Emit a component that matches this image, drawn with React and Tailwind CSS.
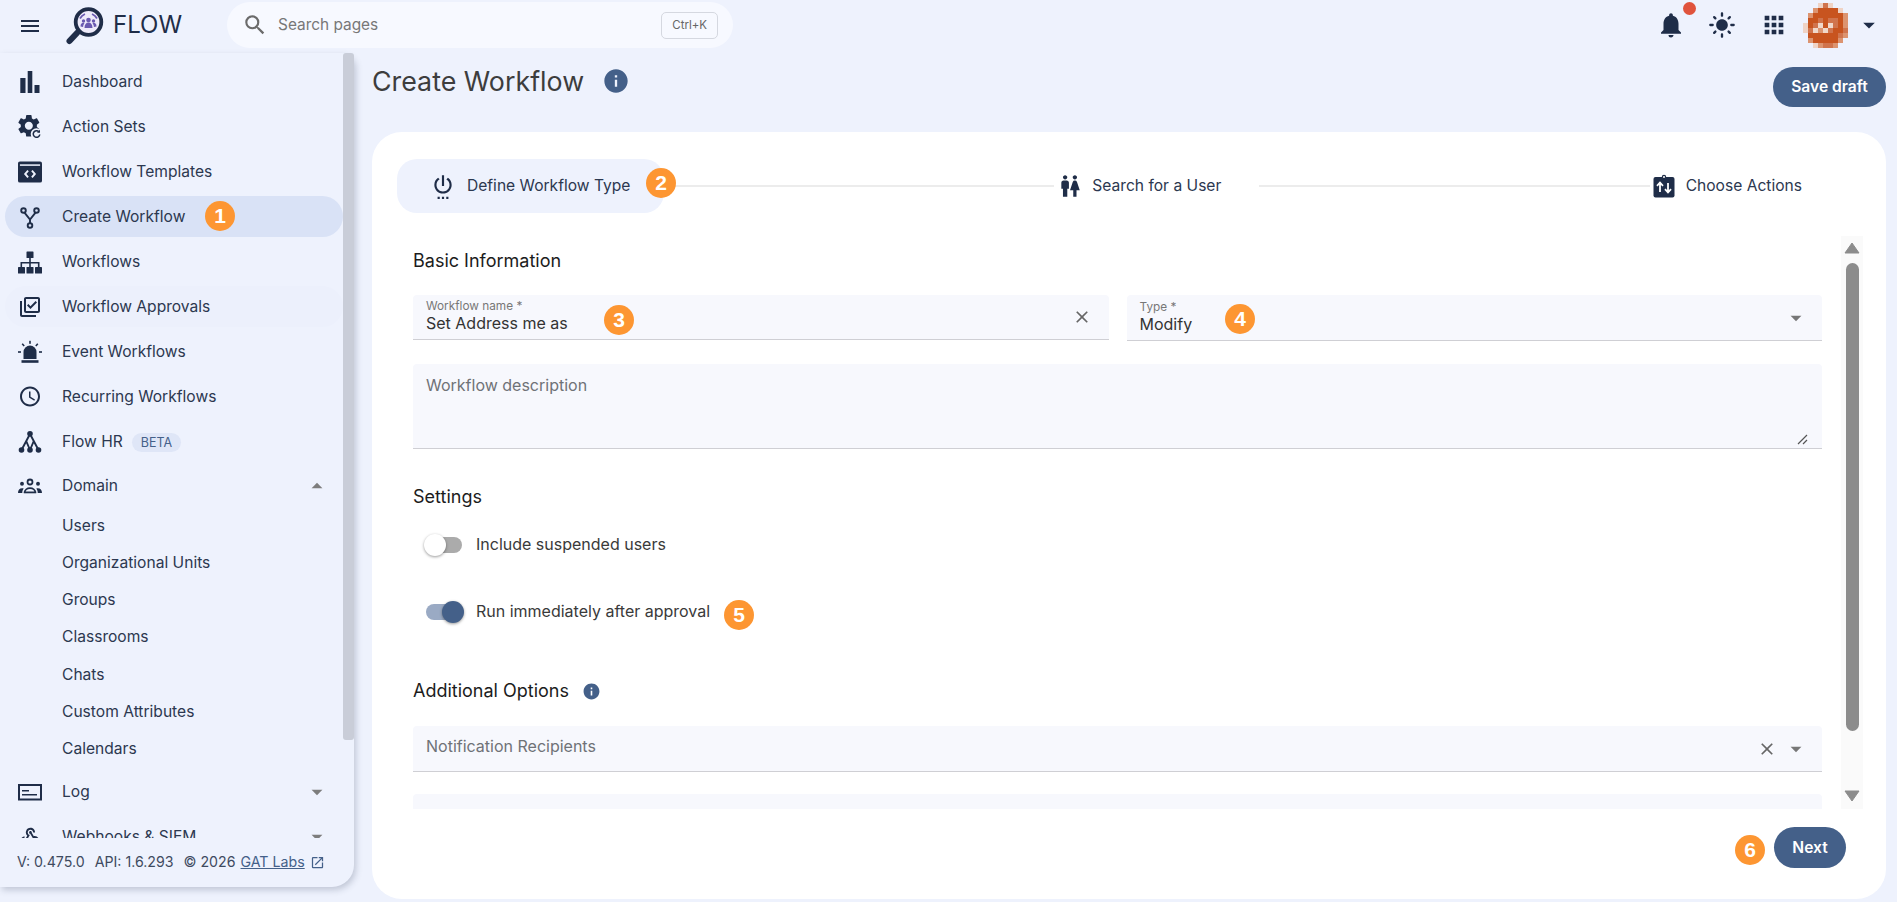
import {
  MdMenu,
  MdSearch,
  MdOutlineLibraryAddCheck,
  MdOutlineSchedule,
  MdWebhook,
  MdOpenInNew,
  MdSettingsPower,
  MdWc,
  MdNotifications,
  MdLightMode,
  MdApps,
  MdArrowDropDown,
  MdArrowDropUp,
  MdClose,
  MdInfo,
} from "react-icons/md";

const GEAR =
  "M19.14 12.94c.04-.3.06-.61.06-.94 0-.32-.02-.64-.07-.94l2.03-1.58c.18-.14.23-.41.12-.61l-1.92-3.32c-.12-.22-.37-.29-.59-.22l-2.39.96c-.5-.38-1.03-.7-1.62-.94l-.36-2.54c-.04-.24-.24-.41-.48-.41h-3.84c-.24 0-.43.17-.47.41l-.36 2.54c-.59.24-1.13.57-1.62.94l-2.39-.96c-.22-.08-.47 0-.59.22L2.74 8.87c-.12.21-.08.47.12.61l2.03 1.58c-.05.3-.09.63-.09.94s.02.64.07.94l-2.03 1.58c-.18.14-.23.41-.12.61l1.92 3.32c.12.22.37.29.59.22l2.39-.96c.5.38 1.03.7 1.62.94l.36 2.54c.05.24.24.41.48.41h3.84c.24 0 .44-.17.47-.41l.36-2.54c.59-.24 1.13-.56 1.62-.94l2.39.96c.22.08.47 0 .59-.22l1.92-3.32c.12-.22.07-.47-.12-.61l-2.01-1.58zM12 15.6c-1.98 0-3.6-1.62-3.6-3.6s1.62-3.6 3.6-3.6 3.6 1.62 3.6 3.6-1.62 3.6-3.6 3.6z";

const NAVY = "#1f2d48";

function BarsIcon() {
  return (
    <svg width="24" height="24" viewBox="0 0 24 24" fill={NAVY}>
      <rect x="2.3" y="8" width="5.2" height="15" />
      <rect x="9.7" y="1" width="4.6" height="22" />
      <rect x="16.5" y="15" width="5" height="8" />
    </svg>
  );
}

function ActionSetsIcon() {
  return (
    <svg width="24" height="24" viewBox="0 0 24 24">
      <path d={GEAR} fill={NAVY} transform="translate(-2.6 -2.6) scale(1.12)" />
      <circle cx="18.5" cy="19" r="5.8" fill="#eef2fd" />
      <path d="M21.8 19.5a3.3 3.3 0 1 1-1-2.9" fill="none" stroke={NAVY} strokeWidth="1.5" />
      <path d="M22 14.8v3h-3z" fill={NAVY} />
    </svg>
  );
}

function TemplatesIcon() {
  return (
    <svg width="25" height="24" viewBox="0 0 25 24">
      <rect x="0" y="1" width="25" height="22" rx="2" fill={NAVY} />
      <rect x="2" y="4" width="21" height="1.6" fill="#eef2fd" />
      <path d="M10.5 10.5l-3 3.5 3 3.5M14.5 10.5l3 3.5-3 3.5" fill="none" stroke="#eef2fd" strokeWidth="2" />
    </svg>
  );
}

function ForkIcon() {
  return (
    <svg width="24" height="24" viewBox="0 0 24 24" fill="none" stroke={NAVY} strokeWidth="1.9">
      <circle cx="5.5" cy="5.5" r="2.3" />
      <circle cx="18.5" cy="5.5" r="2.3" />
      <circle cx="12" cy="20.5" r="2.3" />
      <path d="M6.5 7.6L12 14.5l5.5-6.9M12 14.5v3.7" />
    </svg>
  );
}

function SitemapIcon() {
  return (
    <svg width="24" height="24" viewBox="0 0 24 24" fill={NAVY}>
      <rect x="8.5" y="1.5" width="7" height="6.5" rx="0.6" />
      <rect x="0" y="17" width="7" height="6.5" rx="0.6" />
      <rect x="8.5" y="17" width="7" height="6.5" rx="0.6" />
      <rect x="17" y="17" width="7" height="6.5" rx="0.6" />
      <path d="M11.2 8h1.6v4h8.7v5h-1.6v-3.4h-7.1V17h-1.6v-3.4H4.1V17H2.5v-5h8.7z" />
    </svg>
  );
}

function SirenIcon() {
  return (
    <svg width="24" height="24" viewBox="0 0 24 24" fill={NAVY}>
      <path d="M5.5 19v-7a6.5 6.5 0 0 1 13 0v7z" />
      <rect x="3.5" y="20.2" width="17" height="2.6" />
      <rect x="11.2" y="0.8" width="1.6" height="3" />
      <path d="M3.6 4.2l1.2-1 2 2.3-1.2 1zM20.4 4.2l-1.2-1-2 2.3 1.2 1z" />
      <rect x="0" y="11.2" width="3" height="1.6" />
      <rect x="21" y="11.2" width="3" height="1.6" />
    </svg>
  );
}

function TreeIcon() {
  return (
    <svg width="24" height="24" viewBox="0 0 24 24" fill={NAVY}>
      <circle cx="12" cy="3.8" r="2.8" />
      <circle cx="3.5" cy="20" r="2.8" />
      <circle cx="12" cy="20" r="2.8" />
      <circle cx="20.5" cy="20" r="2.8" />
      <path
        d="M12 4L3.5 20M12 4l8.5 16M8.2 11L12 20M15.8 11L12 20"
        fill="none"
        stroke={NAVY}
        strokeWidth="1.9"
      />
    </svg>
  );
}

function GroupIcon() {
  return (
    <svg width="27" height="24" viewBox="0 0 27 24" fill={NAVY}>
      <circle cx="13.5" cy="7.5" r="2.8" fill="none" stroke={NAVY} strokeWidth="2" />
      <circle cx="4.5" cy="9.5" r="2.2" />
      <circle cx="22.5" cy="9.5" r="2.2" />
      <path d="M7.5 19.5c0-3.2 2.8-5 6-5s6 1.8 6 5v0" fill="none" stroke={NAVY} strokeWidth="2" />
      <rect x="6.5" y="18.2" width="14" height="2" />
      <path d="M0 19.8c0-3 1.8-5.2 4.6-5.2.7 0 1.3.1 1.8.3-1 1.2-1.6 2.9-1.6 4.9zM27 19.8c0-3-1.8-5.2-4.6-5.2-.7 0-1.3.1-1.8.3 1 1.2 1.6 2.9 1.6 4.9z" />
    </svg>
  );
}

function LogIcon() {
  return (
    <svg width="24" height="24" viewBox="0 0 24 24" fill="none" stroke={NAVY}>
      <rect x="1" y="5" width="22" height="14.5" strokeWidth="2" />
      <path d="M4 10.8h7M4 14.7h15" strokeWidth="1.4" />
    </svg>
  );
}

function ActionsIcon() {
  return (
    <svg width="24" height="24" viewBox="0 0 24 24">
      <rect x="1.5" y="3" width="21" height="20.5" rx="2" fill={NAVY} />
      <circle cx="12" cy="3" r="1.6" fill="#fff" stroke={NAVY} strokeWidth="1.2" />
      <path d="M8 18V9M5 11.8L8 8.5l3 3.3M16 9v9M13 15.2l3 3.3 3-3.3" fill="none" stroke="#fff" strokeWidth="1.8" />
    </svg>
  );
}

function Logo() {
  return (
    <svg width="44" height="44" viewBox="0 0 44 44">
      <path d="M13 30L5.5 38" stroke={NAVY} strokeWidth="6" strokeLinecap="round" />
      <circle cx="24.5" cy="19" r="12.8" fill="#eeebfa" stroke={NAVY} strokeWidth="3.8" />
      <g fill="#6a5ab0">
        <circle cx="24.5" cy="17" r="2.3" />
        <circle cx="19.5" cy="18" r="1.7" />
        <circle cx="29.5" cy="18" r="1.7" />
        <path d="M20.5 25c0-3.6 1.6-5.5 4-5.5s4 1.9 4 5.5zM16.5 23.5c0-2.6 1-3.8 3-3.8l1 .8c-1 1-1.3 2-1.4 3.6zM32.5 23.5c0-2.6-1-3.8-3-3.8l-1 .8c1 1 1.3 2 1.4 3.6z" />
      </g>
      <path
        d="M16 15.5a10 10 0 0 1 5-4.5M33 15.5a10 10 0 0 0-5-4.5"
        fill="none"
        stroke="#6a5ab0"
        strokeWidth="1.8"
      />
    </svg>
  );
}

const AVATAR_COLORS = { o: "#c8541f", m: "#d0744d", l: "#dc9470", p: "#efd3c5", w: "#f0d8ca" };
const AVATAR_ROWS = [
  "...pmp...",
  "..loooop.",
  ".looooool",
  ".oomommol",
  "pomwowmol",
  "pmwlwmoom",
  ".ooooooml",
  ".loooool.",
  "..plmml..",
];

function Avatar() {
  return (
    <svg width="45" height="45" viewBox="0 0 45 45" shapeRendering="crispEdges">
      {AVATAR_ROWS.map((row, y) =>
        row.split("").map((c, x) =>
          c === "." ? null : (
            <rect key={`${x}-${y}`} x={x * 5} y={y * 5} width="5" height="5" fill={AVATAR_COLORS[c]} />
          )
        )
      )}
    </svg>
  );
}

function Triangle({ up }) {
  return (
    <svg width="16" height="12" viewBox="0 0 16 12">
      <path d={up ? "M8 1l7 10H1z" : "M1 1h14l-7 10z"} fill="#8c8c8c" stroke="#8c8c8c" strokeLinejoin="round" />
    </svg>
  );
}

function NavItem({ icon, label, active, soft, extra, caret, className = "" }) {
  return (
    <div
      className={`ml-[5px] flex h-[41px] shrink-0 items-center rounded-full pl-[13px] pr-[13px] ${
        active ? "bg-[#d9e2f6]" : soft ? "bg-[#ecf0fc]" : ""
      } ${className}`}
    >
      <span className="flex h-6 w-6 shrink-0 items-center justify-center text-[#1f2d48]">{icon}</span>
      <span className="ml-[20px] text-[15.6px] text-[#2c3850]">{label}</span>
      {extra}
      {caret === "up" && <MdArrowDropUp size={26} className="ml-auto text-[#7d7d7d]" />}
      {caret === "down" && <MdArrowDropDown size={26} className="ml-auto text-[#7d7d7d]" />}
    </div>
  );
}

function SubItem({ label }) {
  return (
    <div className="flex h-[37.2px] shrink-0 items-center pl-[62px] text-[15.6px] text-[#2c3850]">{label}</div>
  );
}

function Sidebar() {
  return (
    <aside className="flex h-[834px] w-[354px] shrink-0 flex-col rounded-tr-[12px] rounded-br-[22px] bg-[#eef2fd] shadow-[2px_3px_6px_rgba(60,70,100,0.25)]">
      <div className="flex h-[785px] overflow-hidden">
        <nav className="flex w-[343px] shrink-0 flex-col gap-[4px] pt-[8px]">
          <NavItem icon={<BarsIcon />} label="Dashboard" />
          <NavItem icon={<ActionSetsIcon />} label="Action Sets" />
          <NavItem icon={<TemplatesIcon />} label="Workflow Templates" />
          <NavItem icon={<ForkIcon />} label="Create Workflow" active />
          <NavItem icon={<SitemapIcon />} label="Workflows" />
          <NavItem icon={<MdOutlineLibraryAddCheck size={28} />} label="Workflow Approvals" soft />
          <NavItem icon={<SirenIcon />} label="Event Workflows" />
          <NavItem icon={<MdOutlineSchedule size={29} />} label="Recurring Workflows" />
          <NavItem
            icon={<TreeIcon />}
            label="Flow HR"
            extra={
              <span className="ml-[9px] mt-[2px] rounded-full bg-[#dfe6f7] px-[9px] py-[2px] text-[12.5px] leading-[15px] text-[#446089]">
                BETA
              </span>
            }
          />
          <NavItem icon={<GroupIcon />} label="Domain" caret="up" className="-mt-[1px]" />
          <div className="-mt-[3px] flex flex-col">
            <SubItem label="Users" />
            <SubItem label="Organizational Units" />
            <SubItem label="Groups" />
            <SubItem label="Classrooms" />
            <SubItem label="Chats" />
            <SubItem label="Custom Attributes" />
            <SubItem label="Calendars" />
          </div>
          <NavItem icon={<LogIcon />} label="Log" caret="down" />
          <NavItem icon={<MdWebhook size={22} />} label="Webhooks & SIEM" caret="down" />
        </nav>
        <div className="h-[687px] w-[11px] shrink-0 rounded-[3px] bg-[#c9cdd8]" />
      </div>
      <div className="flex h-[48px] items-center pl-[17px] text-[14.2px] text-[#3e4a60]">
        <span>V: 0.475.0</span>
        <span className="ml-[10px]">API: 1.6.293</span>
        <span className="ml-[10px]">© 2026</span>
        <span className="ml-[5px] text-[#446089] underline">GAT Labs</span>
        <MdOpenInNew size={15} className="ml-[5px] text-[#446089]" />
      </div>
    </aside>
  );
}

function Field({ label, value, right, className = "" }) {
  return (
    <div
      className={`flex items-center justify-between rounded-t-[4px] border-b border-[#cfcfd4] bg-[#f7f8fd] pl-[13px] pr-[13px] ${className}`}
    >
      <div className="flex flex-col">
        {label && <span className="mt-[1px] text-[11.8px] leading-[13px] text-[#777]">{label}</span>}
        <span className={`text-[16px] leading-[20px] text-[#333] ${label ? "mb-[2px]" : "mb-[5px]"}`}>{value}</span>
      </div>
      <div className="flex items-center">{right}</div>
    </div>
  );
}

function Toggle({ on, label }) {
  return (
    <div className="ml-[11px] flex h-6 items-center">
      <div className="relative h-6 w-[40px] shrink-0">
        <div
          className={`absolute top-[4px] left-[2px] h-[16px] rounded-full ${
            on ? "w-[34px] bg-[#9aaac4]" : "w-[36px] bg-[#ababab]"
          }`}
        />
        <div
          className={`absolute top-[1px] h-[22px] w-[22px] rounded-full shadow-[0_1px_3px_rgba(0,0,0,0.4)] ${
            on ? "left-[18px] bg-[#446089]" : "left-0 bg-white"
          }`}
        />
      </div>
      <span className="mb-[2px] ml-[12px] text-[16px] text-[#3a3a3a]">{label}</span>
    </div>
  );
}

function Badge({ n, className }) {
  return (
    <div
      className={`absolute flex h-[30px] w-[30px] items-center justify-center rounded-full bg-[#fd9632] font-['Liberation_Sans',sans-serif] text-[21px] font-bold text-white ${className}`}
    >
      {n}
    </div>
  );
}

function Card() {
  return (
    <section className="flex h-[767px] flex-col rounded-[30px] bg-white pt-[27px]">
      <div className="flex h-[54px] items-center pl-[25px] pr-[84px]">
        <div className="flex h-[54px] w-[267px] shrink-0 items-center rounded-[20px] bg-[#eef2fd] pl-[33px]">
          <MdSettingsPower size={26} className="text-[#1f2d48]" />
          <span className="ml-[11px] text-[15.6px] text-[#2c3850]">Define Workflow Type</span>
        </div>
        <div className="h-[2px] flex-1 bg-[#ececec]" />
        <div className="flex w-[205px] shrink-0 items-center pl-[3px]">
          <MdWc size={26} className="text-[#1f2d48]" />
          <span className="ml-[9px] text-[15.6px] text-[#2c3850]">Search for a User</span>
        </div>
        <div className="h-[2px] flex-1 bg-[#ececec]" />
        <div className="flex shrink-0 items-center pl-[2px]">
          <ActionsIcon />
          <span className="ml-[10px] text-[15.6px] text-[#2c3850]">Choose Actions</span>
        </div>
      </div>

      <div className="mt-[23px] flex h-[573px] pl-[41px]">
        <div className="w-[1409px] shrink-0 overflow-hidden pt-[13px]">
          <h2 className="text-[18px] leading-[24px] text-[#1c1c1c]">Basic Information</h2>
          <div className="mt-[22px] grid grid-cols-2 gap-[18px]">
            <Field
              className="h-[45px]"
              label="Workflow name *"
              value="Set Address me as"
              right={<MdClose size={20} className="mr-[4px] text-[#666]" />}
            />
            <Field
              className="h-[46px]"
              label="Type *"
              value="Modify"
              right={<MdArrowDropDown size={26} className="text-[#777]" />}
            />
          </div>
          <div className="relative mt-[23px] h-[85px] rounded-t-[4px] border-b border-[#cfcfd4] bg-[#f7f8fd] pl-[13px] pt-[9px]">
            <span className="text-[16px] leading-[20px] text-[#6f7277]">Workflow description</span>
            <svg className="absolute right-[14px] bottom-[3px]" width="12" height="12" viewBox="0 0 12 12">
              <path d="M11 2L2 11M11 7l-4 4" stroke="#555" strokeWidth="1.2" />
            </svg>
          </div>
          <h2 className="mt-[36px] text-[18px] leading-[24px] text-[#1c1c1c]">Settings</h2>
          <div className="mt-[24px]">
            <Toggle label="Include suspended users" />
          </div>
          <div className="mt-[43px]">
            <Toggle on label="Run immediately after approval" />
          </div>
          <div className="mt-[55px] flex h-6 items-center">
            <h2 className="text-[18px] leading-[24px] text-[#1c1c1c]">Additional Options</h2>
            <MdInfo size={19} className="ml-[13px] text-[#446089]" />
          </div>
          <div className="mt-[23px]">
            <Field
              className="h-[46px]"
              value={<span className="text-[#6f7277]">Notification Recipients</span>}
              right={
                <>
                  <MdClose size={20} className="mr-[6px] text-[#666]" />
                  <MdArrowDropDown size={26} className="text-[#777]" />
                </>
              }
            />
          </div>
          <div className="mt-[22px] h-[60px] rounded-t-[4px] bg-[#f7f8fd]" />
        </div>
        <div className="ml-[19px] flex h-[573px] w-[22px] shrink-0 flex-col items-center bg-[#fafafa] pt-[6px]">
          <Triangle up />
          <div className="mt-[9px] h-[468px] w-[13px] rounded-full bg-[#8c8c8c]" />
          <div className="mt-[59px]">
            <Triangle />
          </div>
        </div>
      </div>

      <div className="mt-[18px] flex justify-end pr-[40px]">
        <button className="h-[41px] w-[72px] rounded-full bg-[#446089] text-[15.6px] font-semibold text-white">
          Next
        </button>
      </div>
    </section>
  );
}

export default function App() {
  return (
    <div className="relative h-[902px] w-[1897px] overflow-hidden bg-[#eef2fd] font-['Inter',sans-serif]">
      <header className="flex h-[50px] items-center pl-[18px]">
        <MdMenu size={24} className="mt-[1px] text-[#1f2d48]" />
        <div className="ml-[22px]">
          <Logo />
        </div>
        <span className="ml-[5px] text-[24px] text-[#1f2d48]">FLOW</span>
        <div className="ml-[45px] flex h-[46px] w-[506px] items-center rounded-full bg-[#f7f9ff] pl-[15px] pr-[15px]">
          <MdSearch size={26} className="text-[#6b6b6b]" />
          <span className="ml-[10px] text-[15.4px] text-[#777]">Search pages</span>
          <span className="ml-auto rounded-[5px] border border-[#d5d8e0] px-[10px] py-[5px] text-[11.5px] leading-[15px] text-[#666]">
            Ctrl+K
          </span>
        </div>
        <div className="ml-auto flex items-center pr-[14px]">
          <div className="relative">
            <MdNotifications size={30} className="text-[#1f2d48]" />
            <span className="absolute -top-[8px] left-[27px] h-[13px] w-[13px] rounded-full bg-[#e0533c]" />
          </div>
          <MdLightMode size={28} className="ml-[22px] text-[#1f2d48]" />
          <MdApps size={28} className="ml-[24px] text-[#1f2d48]" />
          <div className="ml-[15px]">
            <Avatar />
          </div>
          <MdArrowDropDown size={28} className="ml-[7px] text-[#1f2d48]" />
        </div>
      </header>

      <div className="mt-[3px] flex">
        <Sidebar />
        <main className="min-w-0 flex-1 pl-[18px] pr-[11px]">
          <div className="flex h-[79px] items-start justify-between">
            <div className="flex items-center pt-[12px]">
              <h1 className="text-[26.8px] leading-[32px] text-[#3d3d3d]">Create Workflow</h1>
              <MdInfo size={28} className="ml-[18px] text-[#446089]" />
            </div>
            <button className="mt-[14px] h-[40px] w-[113px] rounded-full bg-[#446089] text-[15.6px] font-semibold text-white">
              Save draft
            </button>
          </div>
          <Card />
        </main>
      </div>

      <Badge n="1" className="left-[205px] top-[201px]" />
      <Badge n="2" className="left-[646px] top-[168px]" />
      <Badge n="3" className="left-[604px] top-[305px]" />
      <Badge n="4" className="left-[1225px] top-[304px]" />
      <Badge n="5" className="left-[724px] top-[600px]" />
      <Badge n="6" className="left-[1735px] top-[835px]" />
    </div>
  );
}
